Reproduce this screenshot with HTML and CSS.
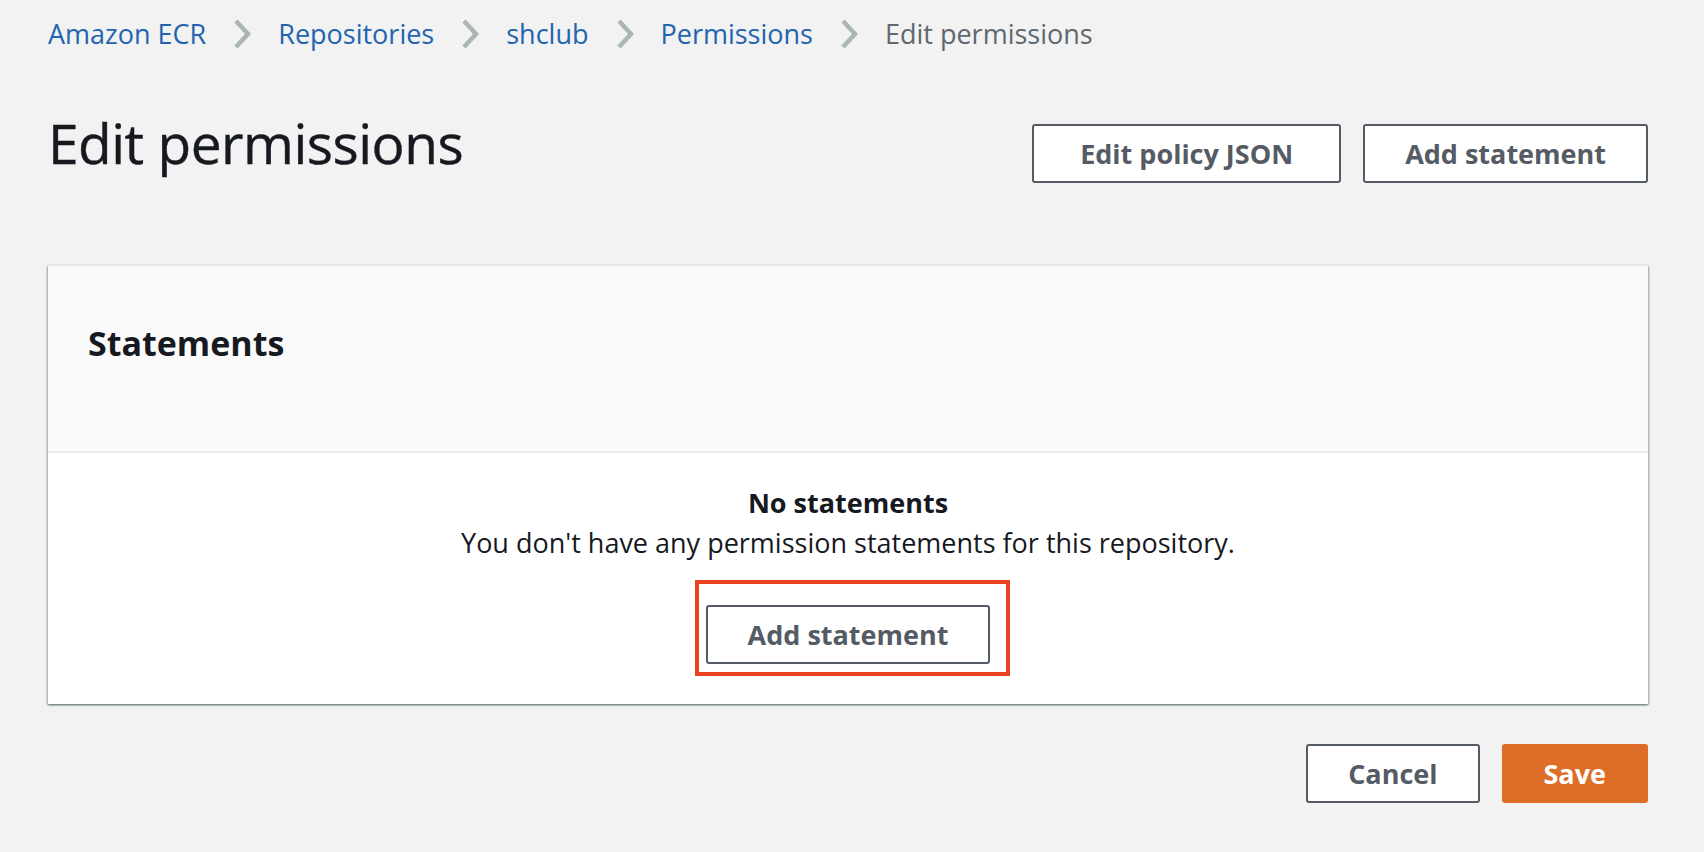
FILE: index.html
```html
<!DOCTYPE html>
<html lang="en">
<head>
<meta charset="utf-8">
<title>Edit permissions</title>
<link rel="stylesheet" href="styles.css">
</head>
<body>
<div class="page">
  <nav class="crumbs">
    <a class="crumb" href="#">Amazon ECR</a>
    <svg class="chev" viewBox="0 0 18 30" width="18" height="30"><polyline points="3,2 15,15 3,28"/></svg>
    <a class="crumb" href="#">Repositories</a>
    <svg class="chev" viewBox="0 0 18 30" width="18" height="30"><polyline points="3,2 15,15 3,28"/></svg>
    <a class="crumb" href="#">shclub</a>
    <svg class="chev" viewBox="0 0 18 30" width="18" height="30"><polyline points="3,2 15,15 3,28"/></svg>
    <a class="crumb" href="#">Permissions</a>
    <svg class="chev" viewBox="0 0 18 30" width="18" height="30"><polyline points="3,2 15,15 3,28"/></svg>
    <span class="crumb current">Edit permissions</span>
  </nav>

  <header class="head">
    <h1 class="title">Edit permissions</h1>
    <div class="actions">
      <button class="btn wide">Edit policy JSON</button>
      <button class="btn">Add statement</button>
    </div>
  </header>

  <section class="panel">
    <div class="panel-head">
      <h2 class="panel-title">Statements</h2>
    </div>
    <div class="panel-body">
      <div class="empty-title">No statements</div>
      <div class="empty-text">You don't have any permission statements for this repository.</div>
      <div class="empty-action">
        <span class="mark">
          <button class="btn">Add statement</button>
          <span class="highlight"></span>
        </span>
      </div>
    </div>
  </section>

  <footer class="foot">
    <button class="btn">Cancel</button>
    <button class="btn primary">Save</button>
  </footer>
</div>
</body>
</html>
```

FILE: styles.css
```css
html, body {
  margin: 0;
  padding: 0;
  background: #f1f2f1;
}

body {
  font-family: "Open Sans", "Noto Sans", sans-serif;
  color: #16191f;
}

.page {
  padding: 14px 56px 0 48px;
}

.crumbs {
  display: flex;
  align-items: center;
  height: 40px;
  font-size: 27px;
  line-height: 40px;
}

.crumb {
  color: #2264b0;
  text-decoration: none;
  white-space: nowrap;
}

.crumb.current {
  color: #5f6770;
}

.chev {
  margin: 0 27px;
  flex: none;
}

.chev polyline {
  fill: none;
  stroke: #a9b5b6;
  stroke-width: 4.5;
}

.head {
  display: flex;
  justify-content: space-between;
  align-items: flex-start;
  margin-top: 56px;
}

.title {
  margin: 0;
  font-size: 55px;
  line-height: 66px;
  font-weight: 400;
  letter-spacing: -0.5px;
  color: #16191f;
  -webkit-text-stroke: 0.4px #16191f;
}

.actions {
  display: flex;
  gap: 22px;
  margin-top: 14px;
}

.btn {
  font-family: "Open Sans", "Noto Sans", sans-serif;
  font-size: 27px;
  font-weight: 700;
  line-height: 35px;
  padding: 10px 40px;
  border: 2px solid #545b64;
  border-radius: 3px;
  background: #ffffff;
  color: #545b64;
  white-space: nowrap;
  cursor: pointer;
}

.btn.wide {
  padding: 10px 46px;
}

.btn.primary {
  background: #de6e27;
  border-color: #de6e27;
  color: #ffffff;
  padding: 10px 40px;
}

.panel {
  margin-top: 82px;
  background: #ffffff;
  border-top: 1px solid #e6e9e9;
  box-shadow: 0 1px 2px rgba(0, 28, 36, 0.35), 1px 1px 2px rgba(0, 28, 36, 0.25), -1px 1px 2px rgba(0, 28, 36, 0.25);
}

.panel-head {
  background: #fafafa;
  border-bottom: 2px solid #eaeded;
  padding: 54px 40px 85px;
}

.panel-title {
  margin: 0;
  font-size: 34px;
  line-height: 46px;
  font-weight: 700;
  color: #16191f;
}

.panel-body {
  padding: 30px 40px 40px;
  text-align: center;
}

.empty-title {
  font-size: 27px;
  line-height: 40px;
  font-weight: 700;
}

.empty-text {
  font-size: 27px;
  line-height: 40px;
}

.empty-action {
  margin-top: 42px;
}

.mark {
  position: relative;
  display: inline-block;
}

.mark .btn {
  display: block;
}

.highlight {
  position: absolute;
  left: -11px;
  right: -20px;
  top: -25px;
  bottom: -12px;
  border: 4px solid #e9421e;
  pointer-events: none;
}

.foot {
  display: flex;
  justify-content: flex-end;
  gap: 22px;
  margin-top: 40px;
}
```
